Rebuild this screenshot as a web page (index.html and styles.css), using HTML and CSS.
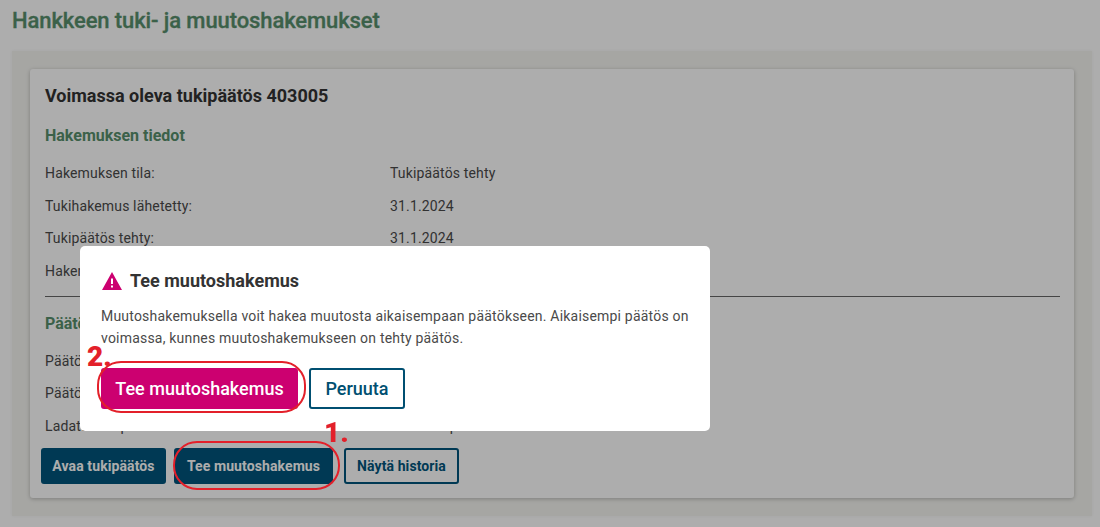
FILE: index.html
```html
<!DOCTYPE html>
<html lang="fi">
<head>
  <meta charset="UTF-8" />
  <title>Hankkeen tuki- ja muutoshakemukset</title>
  <link rel="stylesheet" href="styles.css">
</head>
<body>
  <div class="page">
    <h1>Hankkeen tuki- ja muutoshakemukset</h1>
    <div class="panel">
      <div class="card">
        <h2>Voimassa oleva tukipäätös 403005</h2>
        <h3>Hakemuksen tiedot</h3>
        <div class="rows">
          <div class="row"><span>Hakemuksen tila:</span><span>Tukipäätös tehty</span></div>
          <div class="row"><span>Tukihakemus lähetetty:</span><span>31.1.2024</span></div>
          <div class="row"><span>Tukipäätös tehty:</span><span>31.1.2024</span></div>
          <div class="row"><span>Hakemus käsitelty:</span><span>31.1.2024</span></div>
        </div>
        <hr>
        <h3>Päätöksen tiedot</h3>
        <div class="rows rows-tight">
          <div class="row"><span>Päätösnumero:</span><span>403005</span></div>
          <div class="row"><span>Päätöspäivä:</span><span>31.1.2024</span></div>
          <div class="row"><span>Ladattu tukipäätös:</span><span>Tiedosto.pdf</span></div>
        </div>
        <div class="actions">
          <button class="btn btn-solid">Avaa tukipäätös</button>
          <button class="btn btn-solid btn-wide">Tee muutoshakemus</button>
          <button class="btn btn-line">Näytä historia</button>
        </div>
      </div>
    </div>
  </div>

  <div class="overlay"></div>

  <div class="modal">
    <div class="modal-title">
      <svg class="warn" viewBox="0 0 20 18" width="20" height="18">
        <path d="M10 0 L20 18 L0 18 Z M9 6.5 V12 H11 V6.5 Z M9 13.5 V15.5 H11 V13.5 Z" fill="#cc0070" fill-rule="evenodd"/>
      </svg>
      <h4>Tee muutoshakemus</h4>
    </div>
    <p>Muutoshakemuksella voit hakea muutosta aikaisempaan päätökseen. Aikaisempi päätös on voimassa, kunnes muutoshakemukseen on tehty päätös.</p>
    <div class="modal-actions">
      <button class="btn-big btn-pink">Tee muutoshakemus</button>
      <button class="btn-big btn-outline">Peruuta</button>
    </div>
  </div>

  <div class="ring ring-one"></div>
  <div class="ring ring-two"></div>
  <span class="step step-one">1.</span>
  <span class="step step-two">2.</span>
</body>
</html>
```

FILE: styles.css
```css
html, body {
  margin: 0;
  height: 527px;
  overflow: hidden;
}
body {
  font-family: Roboto, Arial, sans-serif;
  background: #fff;
  color: #4a4a4a;
}
.page {
  padding: 8px 8px 11px 12px;
}
h1 {
  margin: 0 0 17px;
  font-size: 22px;
  line-height: 26px;
  font-weight: 500;
  letter-spacing: -0.1px;
  -webkit-text-stroke: 0.3px #578f6c;
  color: #578f6c;
}
.panel {
  background: #f5f5f1;
  padding: 18px;
  box-shadow: 0 0 3px rgba(0,0,0,0.05);
}
.card {
  background: #fff;
  height: 429px;
  box-sizing: border-box;
  padding: 15px 14px 0 15px;
  border-radius: 3px;
  box-shadow: 0 1px 4px rgba(0,0,0,0.25);
}
h2 {
  margin: 0;
  font-size: 18px;
  line-height: 24px;
  font-weight: 700;
  color: #333;
}
h3 {
  margin: 18px 0 0;
  font-size: 16px;
  line-height: 20px;
  font-weight: 700;
  color: #578f6c;
}
.rows {
  margin-top: 11px;
}
.rows-tight {
  margin-top: 10.5px;
}
.row {
  display: flex;
  height: 32.5px;
  align-items: center;
  font-size: 14px;
  letter-spacing: 0.15px;
}
.row span:first-child {
  width: 345px;
}
hr {
  margin: 0;
  border: none;
  border-top: 1px solid #666;
}
.card hr {
  margin-top: 9px;
}
.card hr + h3 {
  margin-top: 17px;
}
.actions {
  display: flex;
  gap: 8px;
  margin: 5.5px 0 0 -4px;
}
.btn {
  height: 36px;
  box-sizing: border-box;
  border-radius: 3px;
  font-family: inherit;
  font-size: 14px;
  font-weight: 700;
  letter-spacing: 0.1px;
  padding: 0;
}
.btn-solid {
  width: 125px;
  background: #00557c;
  border: 2px solid #00557c;
  color: #fff;
}
.btn-wide {
  width: 159px;
  margin-right: 3px;
}
.btn-line {
  width: 115px;
  background: #fff;
  border: 2px solid #00557c;
  color: #00557c;
}
.overlay {
  position: fixed;
  inset: 0;
  background: rgba(0,0,0,0.32);
}
.modal {
  position: absolute;
  left: 80px;
  top: 246px;
  width: 630px;
  height: 185px;
  box-sizing: border-box;
  padding: 23px 21px 0;
  background: #fff;
  border-radius: 5px;
}
.modal-title {
  display: flex;
  align-items: center;
  gap: 8px;
}
.warn {
  margin-left: 1px;
}
h4 {
  margin: 0;
  font-size: 18px;
  line-height: 24px;
  font-weight: 700;
  color: #333;
}
.modal p {
  margin: 12px 0 0;
  font-size: 14px;
  line-height: 22px;
  letter-spacing: 0.2px;
  color: #4a4a4a;
}
.modal-actions {
  display: flex;
  gap: 11px;
  margin-top: 19px;
}
.btn-big {
  height: 41px;
  box-sizing: border-box;
  border-radius: 3px;
  font-family: inherit;
  font-size: 18px;
  font-weight: 500;
}
.btn-pink {
  width: 197px;
  background: #cc0070;
  border: none;
  color: #fff;
}
.btn-outline {
  width: 96px;
  background: #fff;
  border: 2px solid #004f71;
  color: #004f71;
}
.ring {
  position: absolute;
  box-sizing: border-box;
  border: 2px solid #e3202a;
  border-radius: 24px;
}
.ring-one {
  left: 173px;
  top: 441px;
  width: 167px;
  height: 49px;
}
.ring-two {
  left: 97px;
  top: 361px;
  width: 209px;
  height: 52px;
}
.step {
  position: absolute;
  font-size: 28px;
  line-height: 28px;
  font-weight: 900;
  color: #e3202a;
}
.step-one {
  left: 324px;
  top: 419px;
}
.step-two {
  left: 87px;
  top: 343px;
}
```
